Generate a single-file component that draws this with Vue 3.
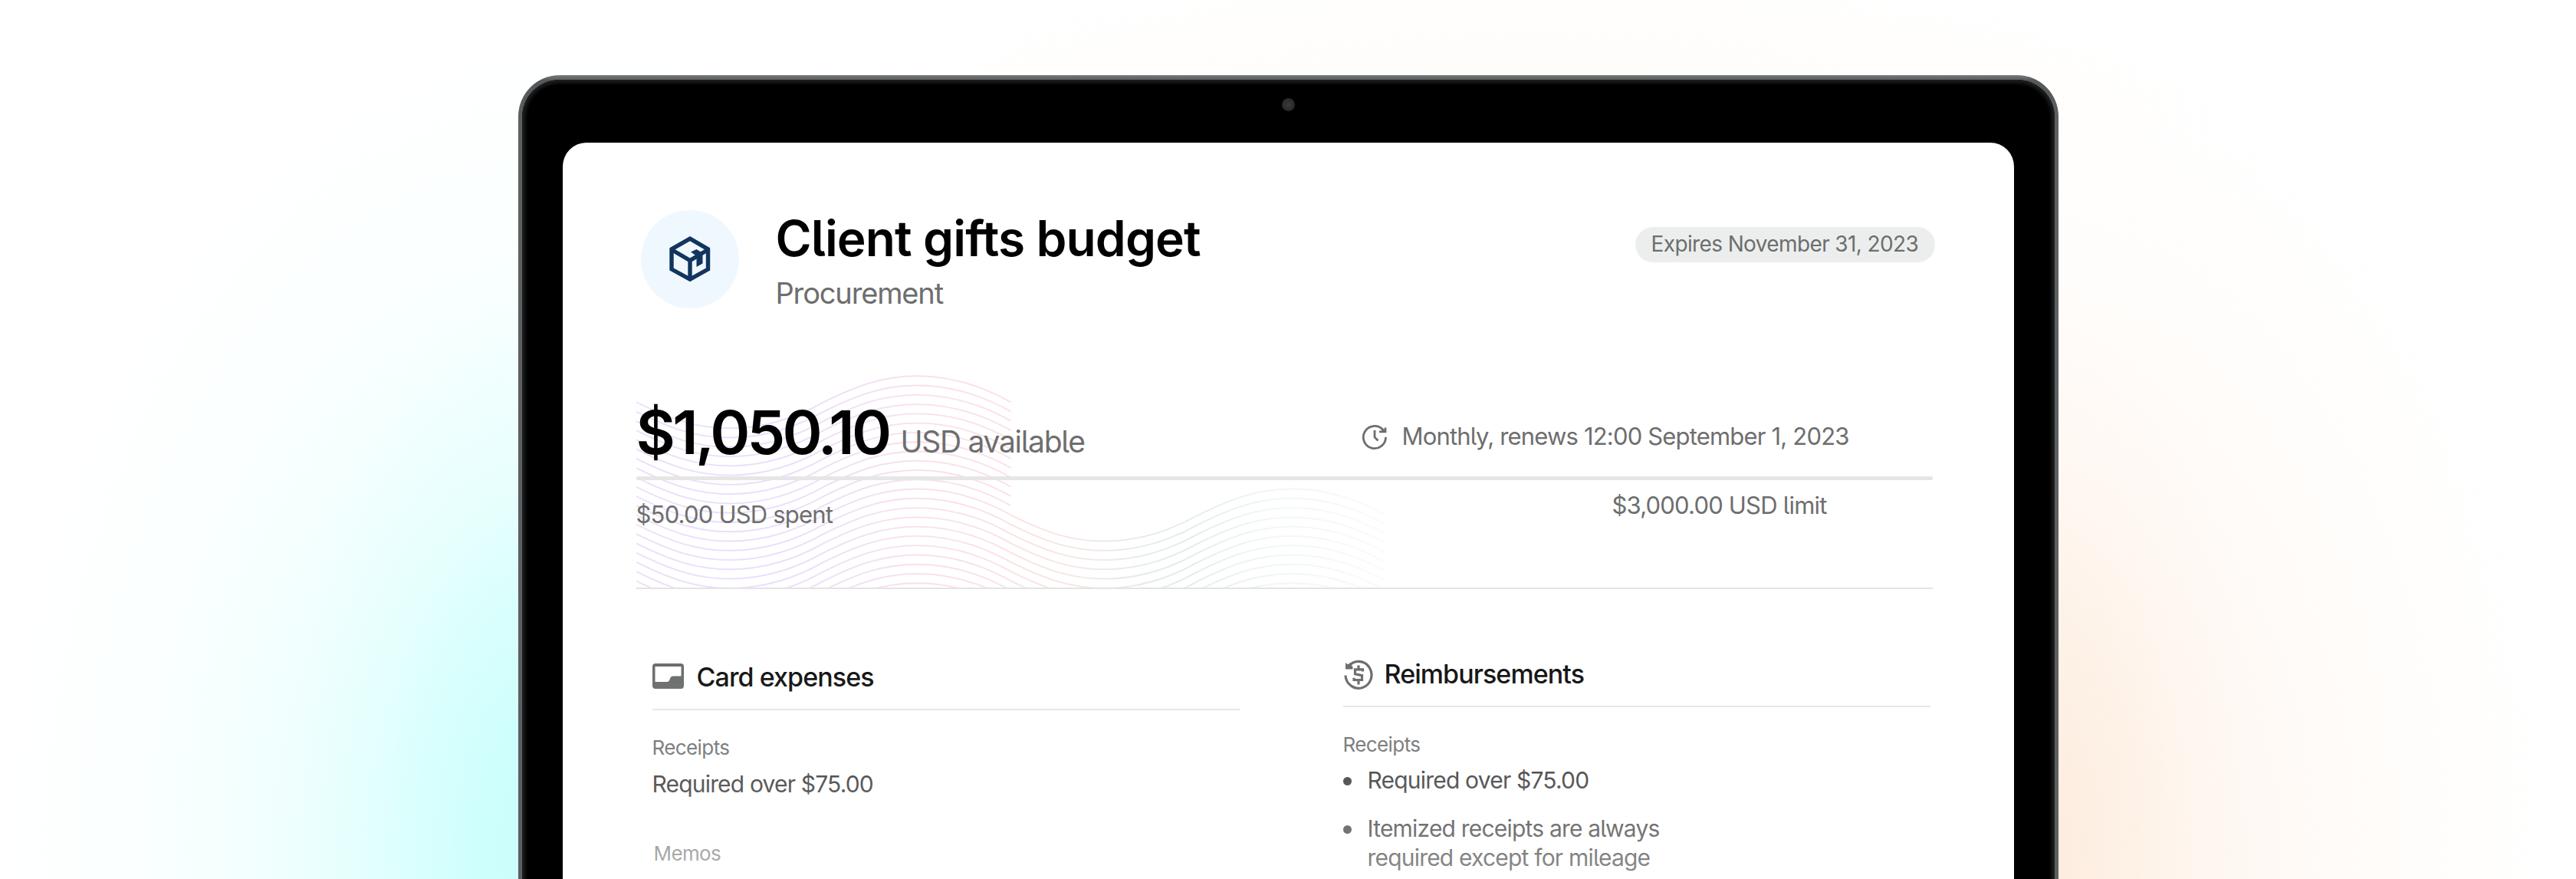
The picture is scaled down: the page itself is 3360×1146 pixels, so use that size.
<template>
  <div class="page">
    <div class="laptop">
      <div class="bezel">
        <div class="camera"></div>
        <main class="screen">
          <header class="header">
            <div class="avatar">
              <svg class="box-icon" viewBox="0 0 54 60">
                <path d="M27 3.2L50.5 16.8V43L27 56.2L3 43V16.8Z" />
                <path d="M3 17.5L27 31.5L50.5 17.5M27 31.5V56" />
                <path class="solid" d="M28 20.5L35.5 17L43.5 22V35.5L35.5 40V29L38 27.5Z" />
              </svg>
            </div>
            <div class="heading">
              <h1 class="title">Client gifts budget</h1>
              <p class="department">Procurement</p>
            </div>
            <span class="pill">Expires November 31, 2023</span>
          </header>

          <section class="balance">
            <svg class="waves" viewBox="0 0 980 284">
              <defs>
                <linearGradient id="wave-color" gradientUnits="userSpaceOnUse" x1="0" y1="0" x2="980" y2="0">
                  <stop offset="0" stop-color="#ecdffb" />
                  <stop offset="0.2" stop-color="#ecdcfd" />
                  <stop offset="0.37" stop-color="#f8e0ee" />
                  <stop offset="0.5" stop-color="#fce1e3" />
                  <stop offset="0.58" stop-color="#f7e6e1" />
                  <stop offset="0.65" stop-color="#e6ebe8" />
                  <stop offset="0.74" stop-color="#dfeee9" />
                  <stop offset="0.85" stop-color="#f0f7f5" />
                  <stop offset="1" stop-color="#f7fbfa" />
                </linearGradient>
              </defs>
              <path v-for="(d, i) in waves" :key="i" :d="d" />
            </svg>
            <div class="balance-top">
              <span class="amount">$1,050.10</span>
              <span class="available">USD available</span>
              <svg class="clock-icon" viewBox="0 0 34 34">
                <path d="M31.5 17A14.6 14.6 0 1 1 27.5 7" />
                <path d="M17 8V17L21.5 21.5" />
                <path class="arrow" d="M31 4.5V9.8H23M26.5 6.5L30 9" />
              </svg>
              <span class="renews">Monthly, renews 12:00 September 1, 2023</span>
            </div>
            <div class="bar"></div>
            <div class="balance-bottom">
              <span class="spent">$50.00 USD spent</span>
              <span class="limit">$3,000.00 USD limit</span>
            </div>
          </section>

          <div class="columns">
            <section class="column">
              <h2 class="column-title">
                <svg class="card-icon" viewBox="0 0 41 33">
                  <path fill-rule="evenodd" d="M4 0H37Q41 0 41 4V29Q41 33 37 33H4Q0 33 0 29V4Q0 0 4 0ZM3.5 4V24H19Q21.5 24 22.5 21L23.5 18.5Q24.5 16.5 27 16.5H37.5V4Z" />
                </svg>
                <span class="card-label">Card expenses</span>
              </h2>
              <h3 class="label">Receipts</h3>
              <p class="value">Required over $75.00</p>
              <h3 class="label memos">Memos</h3>
            </section>
            <section class="column right">
              <h2 class="column-title">
                <svg class="refund-icon" viewBox="0 0 38 40">
                  <path d="M2 20.5A17 17.5 0 1 0 6 8.5" />
                  <path class="solid" d="M2 4L5 6.2L8 4.5L11.5 9.5V12.5H2Z" />
                  <path class="dollar" d="M24.5 15.5V12.8H14.5V18.8L23.5 20.6V26.5H13V23.8M19 7.5V12.5M19 27V32.5" />
                </svg>
                <span class="refund-label">Reimbursements</span>
              </h2>
              <h3 class="label">Receipts</h3>
              <ul class="rules">
                <li class="first">Required over $75.00</li>
                <li class="second">Itemized receipts are always<br />required except for mileage</li>
              </ul>
            </section>
          </div>
          <div class="fade"></div>
        </main>
      </div>
    </div>
  </div>
</template>

<script setup>
const gap = 12.27;

// quarter-wave bezier: down to the trough, back up to the midline
const half = (x, y, dir) =>
  `C${x + 44.5} ${y + 22 * dir} ${x + 78} ${y + 34 * dir} ${x + 122.2} ${y + 34 * dir}` +
  `C${x + 166.4} ${y + 34 * dir} ${x + 205} ${y + 22 * dir} ${x + 244.3} ${y}`;

const waves = Array.from({ length: 26 }, (_, i) => {
  const y = 42.3 + i * gap;
  // the upper rows stop after one period
  const count = i < 12 ? 2 : 4;
  let d = `M0 ${y}`;
  for (let n = 0; n < count; n++) {
    d += half(n * 244.3, y, n % 2 ? -1 : 1);
  }
  return d;
});
</script>

<style>
body {
  margin: 0;
  background: #fff;
}
</style>

<style scoped>
.page {
  display: flex;
  justify-content: center;
  box-sizing: border-box;
  width: 3360px;
  height: 1146px;
  padding-top: 98px;
  overflow: hidden;
  font-family: Inter, "Liberation Sans", sans-serif;
  font-feature-settings: "cv05";
  background:
    radial-gradient(ellipse 330px 720px at 710px 1100px, rgba(198, 255, 252, 0.85) 0%, rgba(202, 255, 252, 0.65) 30%, rgba(215, 255, 253, 0.3) 65%, rgba(230, 255, 254, 0) 100%),
    radial-gradient(ellipse 720px 1080px at 720px 1130px, #d2fffc 0%, rgba(215, 255, 253, 0.75) 25%, rgba(222, 255, 253, 0.45) 50%, rgba(232, 255, 254, 0.2) 75%, rgba(255, 255, 255, 0) 100%),
    radial-gradient(ellipse 300px 720px at 2650px 1100px, rgba(253, 235, 220, 0.9) 0%, rgba(253, 237, 223, 0.6) 35%, rgba(254, 242, 232, 0.25) 68%, rgba(255, 248, 242, 0) 100%),
    radial-gradient(ellipse 700px 1100px at 2650px 1130px, #fef2e8 0%, rgba(254, 245, 237, 0.8) 30%, rgba(255, 248, 243, 0.6) 55%, rgba(255, 252, 249, 0.4) 80%, rgba(255, 255, 255, 0) 100%),
    radial-gradient(ellipse 900px 180px at 2000px 130px, #fffcf9 0%, rgba(255, 255, 255, 0) 100%),
    #fff;
}

h1,
h2,
h3,
p,
ul {
  margin: 0;
  padding: 0;
  font-weight: 400;
}

span,
h1,
p,
h3 {
  white-space: nowrap;
}

svg {
  flex: none;
  fill: none;
}

.laptop {
  flex: none;
  box-sizing: border-box;
  width: 2009px;
  height: 1200px;
  padding: 6px 5px 0;
  border-radius: 54px 54px 0 0;
  background: linear-gradient(#77797a 0, #55585a 7px, #5d5f60 60px, #5d5f60 100%);
}

.bezel {
  box-sizing: border-box;
  height: 1194px;
  padding: 82px 53px 0;
  border-radius: 49px 49px 0 0;
  background: #000;
  box-shadow: inset 0 0 4px 4px #1d1f1f;
  position: relative;
}

.camera {
  position: absolute;
  top: 24px;
  left: 991px;
  width: 17px;
  height: 17px;
  border-radius: 50%;
  background: radial-gradient(circle, #3a3b3c 0, #2a2b2b 60%, #202121 100%);
}

.screen {
  position: relative;
  box-sizing: border-box;
  height: 1112px;
  padding-top: 88px;
  border-radius: 31px 31px 0 0;
  background: #fff;
  color: #6d6e6e;
}

.header {
  display: flex;
  height: 206px;
  padding: 0 103px 0 102px;
}

.avatar {
  display: flex;
  align-items: center;
  justify-content: center;
  flex: none;
  width: 128px;
  height: 128px;
  border-radius: 50%;
  background: #f0f8ff;
}

.box-icon {
  width: 54px;
  height: 60px;
  stroke: #12355f;
  stroke-width: 5.4;
}

.box-icon .solid {
  fill: #12355f;
  stroke: none;
}

.heading {
  flex: 1;
  padding-left: 48px;
}

.title {
  height: 80px;
  margin-top: -3px;
  font-size: 64px;
  font-weight: 600;
  line-height: 80px;
  letter-spacing: -0.87px;
  color: #000;
}

.department {
  margin-top: 7px;
  font-size: 38px;
  line-height: 48px;
  letter-spacing: -1.15px;
}

.pill {
  box-sizing: border-box;
  width: 391px;
  height: 46px;
  margin-top: 22px;
  padding-left: 21px;
  border-radius: 23px;
  background: #eceeed;
  font-size: 28px;
  line-height: 45px;
  letter-spacing: -0.62px;
}

.balance {
  position: relative;
  box-sizing: border-box;
  width: 1691px;
  height: 288px;
  margin-left: 96px;
  border-bottom: 2px solid #e4e4e4;
}

.waves {
  position: absolute;
  top: 2px;
  left: 0;
  width: 980px;
  height: 284px;
  stroke: url(#wave-color);
  stroke-width: 1.9;
}

.balance-top {
  position: relative;
  display: flex;
  align-items: flex-start;
  height: 141px;
}

.amount {
  width: 345px;
  padding-top: 33px;
  font-size: 79px;
  font-weight: 600;
  line-height: 100px;
  letter-spacing: -3.7px;
  color: #000;
}

.available {
  width: 600px;
  padding-top: 71px;
  font-size: 39px;
  line-height: 50px;
  letter-spacing: -1.3px;
}

.clock-icon {
  width: 34px;
  height: 34px;
  margin: 73px 0 0 1px;
  stroke: #6d6e6e;
  stroke-width: 2.8;
}

.renews {
  margin-left: 19px;
  padding-top: 69px;
  font-size: 31px;
  line-height: 40px;
  letter-spacing: -0.82px;
}

.bar {
  position: relative;
  height: 5px;
  border-radius: 2px;
  background: #e6e6e6;
}

.balance-bottom {
  position: relative;
  display: flex;
  font-size: 31px;
  line-height: 40px;
  letter-spacing: -0.8px;
}

.spent {
  width: 1273px;
  padding-top: 25px;
}

.limit {
  padding-top: 13px;
}

.columns {
  display: flex;
  gap: 135px;
  padding: 92px 0 0 117px;
}

.column {
  width: 766px;
  padding-top: 4px;
}

.column.right {
  padding-top: 0;
}

.column-title {
  display: flex;
  box-sizing: border-box;
  height: 62px;
  border-bottom: 2px solid #e6e6e6;
  font-size: 34px;
  font-weight: 500;
  line-height: 38px;
  letter-spacing: -0.92px;
  color: #161616;
}

.card-icon {
  width: 41px;
  height: 33px;
  margin: 1px 17px 0 0;
  fill: #6d6e6e;
}

.refund-icon {
  width: 38px;
  height: 40px;
  margin: 0 15px 0 1px;
  stroke: #6d6e6e;
  stroke-width: 3.2;
}

.refund-icon .solid {
  fill: #6d6e6e;
  stroke: none;
}

.label {
  margin-top: 32px;
  font-size: 26px;
  font-weight: 400;
  line-height: 34px;
  letter-spacing: -0.6px;
}

.value {
  margin-top: 11px;
  font-size: 30px;
  line-height: 38px;
  letter-spacing: -0.82px;
  color: #2c2c2c;
}

.label.memos {
  margin: 55px 0 0 2px;
}

.rules {
  margin-top: 10px;
  list-style: none;
  font-size: 30px;
  line-height: 38px;
  letter-spacing: -0.8px;
  color: #2c2c2c;
}

.rules li {
  position: relative;
  padding-left: 32px;
}

.rules li::before {
  content: "";
  position: absolute;
  top: 15px;
  left: 0;
  width: 11px;
  height: 11px;
  border-radius: 50%;
  background: currentColor;
}

.rules .second {
  margin-top: 25px;
}

.fade {
  position: absolute;
  inset: 690px 0 0;
  background: linear-gradient(rgba(255, 255, 255, 0), rgba(255, 255, 255, 0.12) 100px, rgba(255, 255, 255, 0.45) 260px, #fff 420px);
}
</style>
